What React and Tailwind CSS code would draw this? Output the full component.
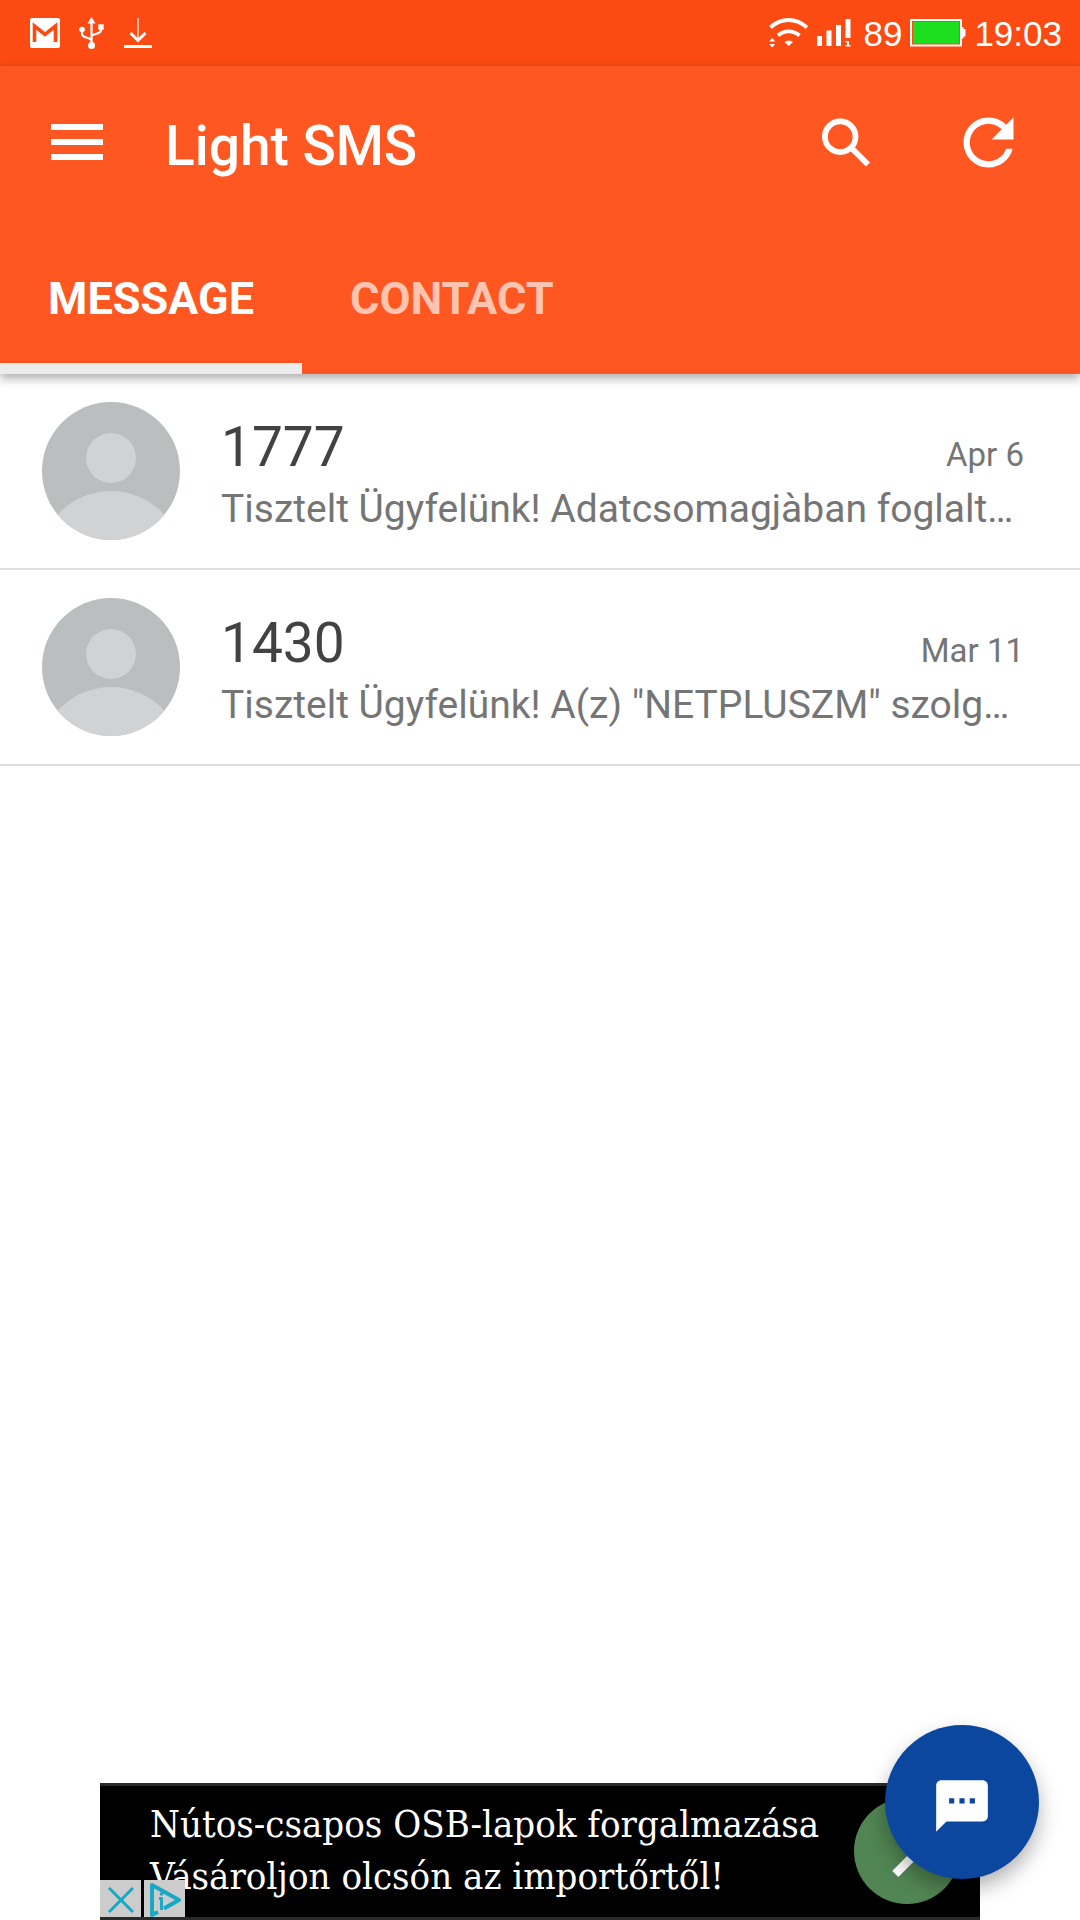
import { useState } from 'react'
import { MdChevronRight, MdRefresh, MdSms } from 'react-icons/md'

const TABS = ['Message', 'Contact']

const THREADS = [
  { id: 1, sender: '1777', date: 'Apr 6', preview: 'Tisztelt Ügyfelünk! Adatcsomagjàban foglalt…' },
  { id: 2, sender: '1430', date: 'Mar 11', preview: 'Tisztelt Ügyfelünk! A(z) "NETPLUSZM" szolg…' }
]

function MailIcon() {
  return (
    <svg width="30" height="30" viewBox="0 0 30 30" aria-hidden="true">
      <rect width="30" height="30" rx="2" fill="#fff" />
      <path d="M4.500 24V8L15 16.500L25.500 8V24" fill="none" stroke="#fb4b12" strokeWidth="3.600" />
    </svg>
  )
}

function UsbIcon() {
  return (
    <svg width="26" height="32" viewBox="0 0 26 32" fill="none" stroke="#fff" strokeWidth="2.200" aria-hidden="true">
      <path d="M12.500 5V28M12.500 24C12.500 20 3 21.500 3 17V13M12.500 19.500C12.500 16 22 18 22 13V10" />
      <path d="M12.500 0L16.500 6.500H8.500Z" fill="#fff" stroke="none" />
      <circle cx="3" cy="12.500" r="2.800" fill="#fff" stroke="none" />
      <rect x="19.300" y="7.300" width="5.400" height="5.400" fill="#fff" stroke="none" />
      <circle cx="12.500" cy="28.500" r="3.500" fill="#fff" stroke="none" />
    </svg>
  )
}

function DownloadIcon() {
  return (
    <svg width="28" height="30" viewBox="0 0 28 30" fill="none" stroke="#fff" aria-hidden="true">
      <path d="M14 0V22" strokeWidth="2" opacity="0.6" />
      <path d="M6.500 15L14 22.500L21.500 15" strokeWidth="3" />
      <path d="M0 28.500H28" strokeWidth="3" />
    </svg>
  )
}

function WifiIcon() {
  return (
    <svg width="40" height="30" viewBox="0 0 40 30" fill="none" stroke="#fff" strokeWidth="3.800" aria-hidden="true">
      <path d="M1.500 9.500C12 -0.500 27 -0.500 38 9.500" />
      <path d="M9 17.500C15 12 24 12 30.500 17.500" />
      <path d="M15.500 24Q19.800 21 24 24L19.800 28Z" fill="#fff" stroke="none" />
      <path d="M3.200 20L6.200 23.500H0.200ZM3.200 29.500L6.200 26H0.200Z" fill="#fff" stroke="none" />
    </svg>
  )
}

function SignalIcon() {
  return (
    <svg width="34" height="28" viewBox="0 0 34 28" fill="#fff" aria-hidden="true">
      <rect x="0" y="17" width="5" height="10" />
      <rect x="9.500" y="11.500" width="5" height="15.500" />
      <rect x="19" y="6" width="5" height="21" />
      <rect x="28.500" y="0" width="5" height="19" />
      <path d="M28.500 22H32V26H33.500V27.500H28.500V26H30V23.500H28.500Z" />
    </svg>
  )
}

function BatteryIcon() {
  return (
    <svg width="56" height="28" viewBox="0 0 56 28" aria-hidden="true">
      <rect x="1" y="1" width="50" height="25.500" fill="none" stroke="#fff" strokeWidth="2" />
      <rect x="3" y="3" width="46" height="21.500" fill="#1ddf1d" />
      <path d="M52 8H53.500V10H55.500V17.500H53.500V19.500H52Z" fill="#fff" />
    </svg>
  )
}

function MenuIcon() {
  return (
    <svg width="52" height="36" viewBox="0 0 52 36" fill="#fff" aria-hidden="true">
      <rect width="52" height="6" />
      <rect y="15" width="52" height="6" />
      <rect y="30" width="52" height="6" />
    </svg>
  )
}

function SearchIcon() {
  return (
    <svg width="50" height="50" viewBox="0 0 50 50" fill="none" stroke="#fff" strokeWidth="5.800" aria-hidden="true">
      <circle cx="19.200" cy="19.700" r="15.300" />
      <path d="M29.500 30L33 33.500" strokeWidth="3" />
      <path d="M32 32.500L47 47.500" />
    </svg>
  )
}

function Avatar() {
  return (
    <div className="size-[138px] shrink-0 overflow-hidden rounded-full bg-[#babebf]">
      <svg viewBox="0 0 138 138" fill="#d0d2d4" aria-hidden="true">
        <circle cx="69" cy="56" r="25" />
        <circle cx="69" cy="161" r="72" />
      </svg>
    </div>
  )
}

function StatusBar() {
  return (
    <div className="flex h-[66px] items-center justify-between bg-[#fb4b12] pr-[18px] pl-[30px] font-['Liberation_Sans',sans-serif] text-[35px] text-white">
      <div className="flex items-center gap-[19px]">
        <MailIcon />
        <UsbIcon />
        <DownloadIcon />
      </div>
      <div className="flex items-center gap-2">
        <WifiIcon />
        <SignalIcon />
        <span className="pt-[2px] pl-1">89</span>
        <BatteryIcon />
        <span className="pt-[2px]">19:03</span>
      </div>
    </div>
  )
}

function ThreadRow({ thread }) {
  return (
    <li className="border-b-2 border-[#dedede]">
      <a href={`#thread-${thread.id}`} className="flex h-[194px] items-center gap-[41px] pr-14 pl-[42px]">
        <Avatar />
        <div className="min-w-0 flex-1 pt-1">
          <div className="flex items-baseline justify-between">
            <span className="text-[55px] leading-[72px] text-[#424242]">{thread.sender}</span>
            <span className="text-[33px] text-[#757575]">{thread.date}</span>
          </div>
          <p className="truncate text-[39px] leading-[52px] text-[#757575]">{thread.preview}</p>
        </div>
      </a>
    </li>
  )
}

function AdBanner() {
  return (
    <aside className="relative mx-auto h-[137px] w-full max-w-[880px] overflow-hidden border-y-[3px] border-[#2a2a2a] bg-black">
      <a href="#ad" className="flex h-full items-start justify-between pr-5 pl-[50px] text-white">
        <p className="pt-3 font-['DejaVu_Serif_Condensed','DejaVu_Serif',serif] text-[38px] leading-[52px] whitespace-nowrap">
          Nútos-csapos OSB-lapok forgalmazása
          <br />
          Vásároljon olcsón az importőrtől!
        </p>
        <span className="mt-3 flex size-[106px] shrink-0 items-center justify-center rounded-full bg-[#518553]">
          <MdChevronRight size={104} />
        </span>
      </a>
      <div className="absolute -bottom-[3px] left-0 flex gap-[3px] bg-black">
        <button aria-label="Close ad" className="flex h-10 w-[41px] items-center justify-center bg-[#cccccc]">
          <svg width="26" height="26" viewBox="0 0 26 26" stroke="#18a9c4" strokeWidth="3" aria-hidden="true">
            <path d="M1 1L25 25M25 1L1 25" />
          </svg>
        </button>
        <button aria-label="Ad choices" className="flex h-10 w-[41px] items-center justify-center bg-[#cccccc]">
          <svg width="32" height="34" viewBox="0 0 32 34" fill="none" stroke="#18a9c4" strokeWidth="4" strokeLinejoin="round" aria-hidden="true">
            <path d="M9 29L3 32V2L30 17L15 25.500" />
            <path d="M10 15.500H12.500V27" strokeWidth="3" />
            <circle cx="12.500" cy="11" r="1.800" fill="#18a9c4" stroke="none" />
          </svg>
        </button>
      </div>
    </aside>
  )
}

function App() {
  const [activeTab, setActiveTab] = useState('Message')

  return (
    <div className="flex min-h-screen flex-col bg-white font-[Roboto,sans-serif]">
      <StatusBar />

      {/* App bar */}
      <header className="relative z-10 bg-[#ff5722] text-white shadow-[0_4px_10px_rgba(0,0,0,0.35)]">
        <div className="flex h-[164px] items-center pr-[54px] pb-3 pl-[51px]">
          <button aria-label="Menu">
            <MenuIcon />
          </button>
          <h1 className="flex-1 pt-2 pl-[62px] text-[55px] font-medium">Light SMS</h1>
          <button aria-label="Search">
            <SearchIcon />
          </button>
          <button aria-label="Refresh" className="ml-20">
            <MdRefresh size={75} />
          </button>
        </div>

        <nav className="flex h-36">
          {TABS.map(tab => (
            <button
              key={tab}
              onClick={() => setActiveTab(tab)}
              className={`border-b-[11px] px-12 pt-1 text-[45px] font-bold uppercase ${
                activeTab === tab ? 'border-[#ececec] text-white' : 'border-transparent text-[#ffc4b0]'
              }`}
            >
              {tab}
            </button>
          ))}
        </nav>
      </header>

      <main className="flex-1">
        <ul>
          {THREADS.map(thread => (
            <ThreadRow key={thread.id} thread={thread} />
          ))}
        </ul>
      </main>

      <AdBanner />

      {/* New message */}
      <button
        aria-label="New message"
        className="fixed right-[41px] bottom-[41px] z-20 flex size-[154px] items-center justify-center rounded-full bg-[#0b479f] pt-2 text-white shadow-[0_10px_20px_rgba(0,0,0,0.3)]"
      >
        <MdSms size={62} />
      </button>
    </div>
  )
}

export default App
